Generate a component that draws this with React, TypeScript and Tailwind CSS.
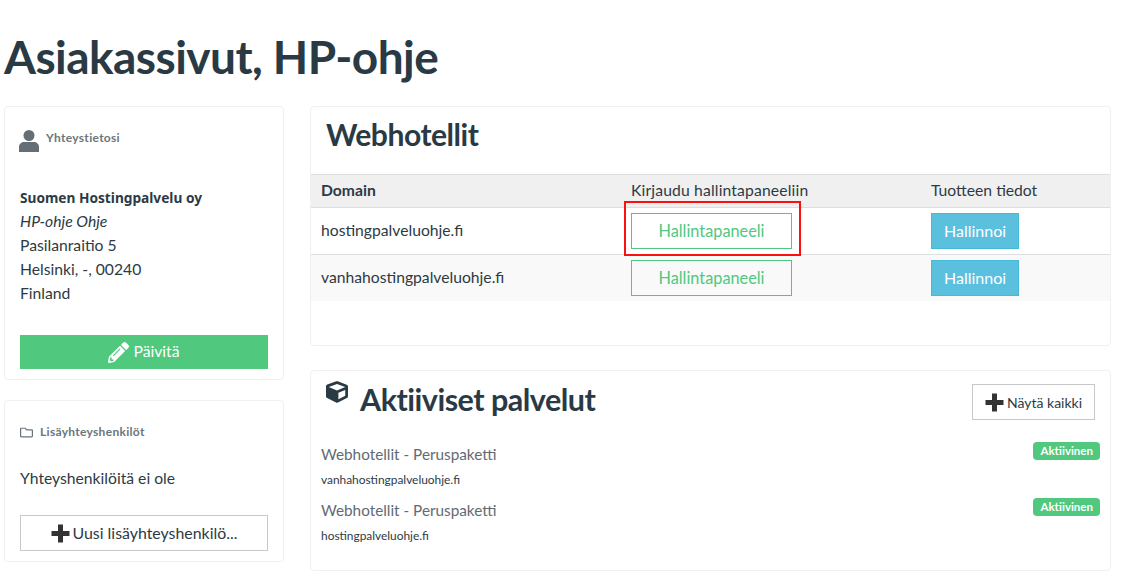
import React from 'react';
import { FaCube, FaPencilAlt, FaRegFolder } from 'react-icons/fa';

const font = { fontFamily: '"Lato", "Noto Sans", sans-serif' };

function PlusIcon() {
  return (
    <svg width="19" height="19" viewBox="0 0 19 19" className="shrink-0 text-[#333]" fill="currentColor">
      <path d="M7 0.5h5v6.5h6.5v5H12v6.5H7V12H0.5V7H7z" />
    </svg>
  );
}

function UserIcon() {
  return (
    <svg width="20" height="22" viewBox="0 0 20 22" className="-ml-[1px] text-[#636e76]" fill="currentColor">
      <circle cx="10" cy="5.5" r="5.5" />
      <path d="M0 22v-5c0-3 2.5-5 5-5h10c2.5 0 5 2 5 5v5z" />
    </svg>
  );
}

const domains = ['hostingpalveluohje.fi', 'vanhahostingpalveluohje.fi'];
const services = ['vanhahostingpalveluohje.fi', 'hostingpalveluohje.fi'];

export default function App() {
  return (
    <div style={font} className="relative h-[583px] w-[1136px] overflow-hidden bg-white text-[15.7px] text-[#2d3a44]">
      <h1 className="pl-[4px] pt-[27px] text-[46px] leading-[60px] font-bold tracking-[-0.55px] text-[#2a3a45]">
        Asiakassivut, HP-ohje
      </h1>

      <div className="mt-[19px] flex items-start pl-[4px]">
        {/* Sidebar */}
        <div className="flex w-[280px] shrink-0 flex-col gap-[20px]">
          <div className="h-[274px] rounded border border-[#f0f0f0] px-[15px]">
            <div className="flex items-start gap-[7px] pt-[23px]">
              <UserIcon />
              <span className="mt-[1px] text-[12px] leading-[14px] font-bold tracking-[0.3px] text-[#6b757c]">Yhteystietosi</span>
            </div>
            <div className="mt-[34px] leading-[24px]">
              <div className="font-['Noto_Sans'] text-[13.7px] leading-[23px] font-bold">Suomen Hostingpalvelu oy</div>
              <div className="italic">HP-ohje Ohje</div>
              <div>Pasilanraitio 5</div>
              <div>Helsinki, -, 00240</div>
              <div>Finland</div>
            </div>
            <button type="button" className="mt-[30px] flex h-[34px] w-[248px] items-center justify-center gap-[4px] bg-[#50c87e] text-white">
              <FaPencilAlt className="h-[21px] w-[21px]" />
              Päivitä
            </button>
          </div>

          <div className="h-[162px] rounded border border-[#f0f0f0] px-[15px]">
            <div className="flex items-center gap-[7px] pt-[24px]">
              <FaRegFolder className="h-[13px] w-[13px] text-[#6b757c]" />
              <span className="text-[12px] leading-[14px] font-bold tracking-[0.3px] text-[#6b757c]">Lisäyhteyshenkilöt</span>
            </div>
            <div className="mt-[27px] leading-[24px]">Yhteyshenkilöitä ei ole</div>
            <button type="button" className="mt-[25px] flex h-[36px] w-[248px] items-center justify-center gap-[3px] border border-[#c8c8c8] text-[15.9px]">
              <PlusIcon />
              Uusi lisäyhteyshenkilö...
            </button>
          </div>
        </div>

        {/* Main */}
        <div className="ml-[26px] flex w-[801px] shrink-0 flex-col gap-[24px]">
          <div className="h-[240px] rounded border border-[#f0f0f0]">
            <h2 className="pl-[15px] pt-[8px] text-[30.1px] leading-[38px] font-bold tracking-[-0.5px] text-[#2a3a45]">Webhotellit</h2>
            <div className="mt-[21px] grid h-[34px] grid-cols-[310px_300px_1fr] items-center border-y border-[#dedede] bg-[#f0f0f0]">
              <span className="pl-[10px] font-bold">Domain</span>
              <span className="pl-[10px] tracking-[0.15px]">Kirjaudu hallintapaneeliin</span>
              <span className="pl-[10px]">Tuotteen tiedot</span>
            </div>
            {domains.map((domain, i) => (
              <div
                key={domain}
                className={`grid grid-cols-[310px_300px_1fr] items-center ${
                  i === 0 ? 'h-[47px] border-b border-[#dedede]' : 'h-[46px] bg-[#f9f9f9]'
                }`}
              >
                <span className="pl-[10px]">{domain}</span>
                <div className="pl-[10px]">
                  <button type="button" className="h-[36px] w-[161px] border border-[#50c87e] text-[16.3px] text-[#50c87e]">Hallintapaneeli</button>
                </div>
                <div className="pl-[10px]">
                  <button type="button" className="h-[36px] w-[88px] border border-[#46b8da] bg-[#5bc0de] text-[16px] text-white">Hallinnoi</button>
                </div>
              </div>
            ))}
          </div>

          <div className="h-[201px] rounded border border-[#f0f0f0] px-[10px]">
            <div className="flex items-start">
              <FaCube className="mt-[10px] ml-[5px] h-[22px] w-[22px] text-[#2a3a45]" />
              <h2 className="ml-[12px] mt-[8px] text-[30.5px] leading-[40px] font-bold tracking-[-0.5px] text-[#2a3a45]">Aktiiviset palvelut</h2>
              <button type="button" className="mt-[13px] mr-[5px] ml-auto flex h-[36px] w-[123px] items-center justify-center gap-[3px] border border-[#c8c8c8] text-[14px]">
                <PlusIcon />
                Näytä kaikki
              </button>
            </div>
            <div className="mt-[24px] flex flex-col gap-[11px]">
              {services.map((service) => (
                <div key={service} className="flex items-start justify-between">
                  <div>
                    <div className="text-[15.3px] leading-[20px] text-[#5f6b73]">Webhotellit - Peruspaketti</div>
                    <div className="mt-[7px] text-[11.9px] leading-[18px]">{service}</div>
                  </div>
                  <span className="-mt-[2px] rounded bg-[#50c87e] px-[7px] text-[11.5px] leading-[18px] font-bold text-white">Aktiivinen</span>
                </div>
              ))}
            </div>
          </div>
        </div>
      </div>

      {/* red highlight drawn over the screenshot */}
      <div className="absolute top-[201px] left-[624px] h-[55px] w-[177px] border-2 border-[#fb0f0f]" />
    </div>
  );
}
